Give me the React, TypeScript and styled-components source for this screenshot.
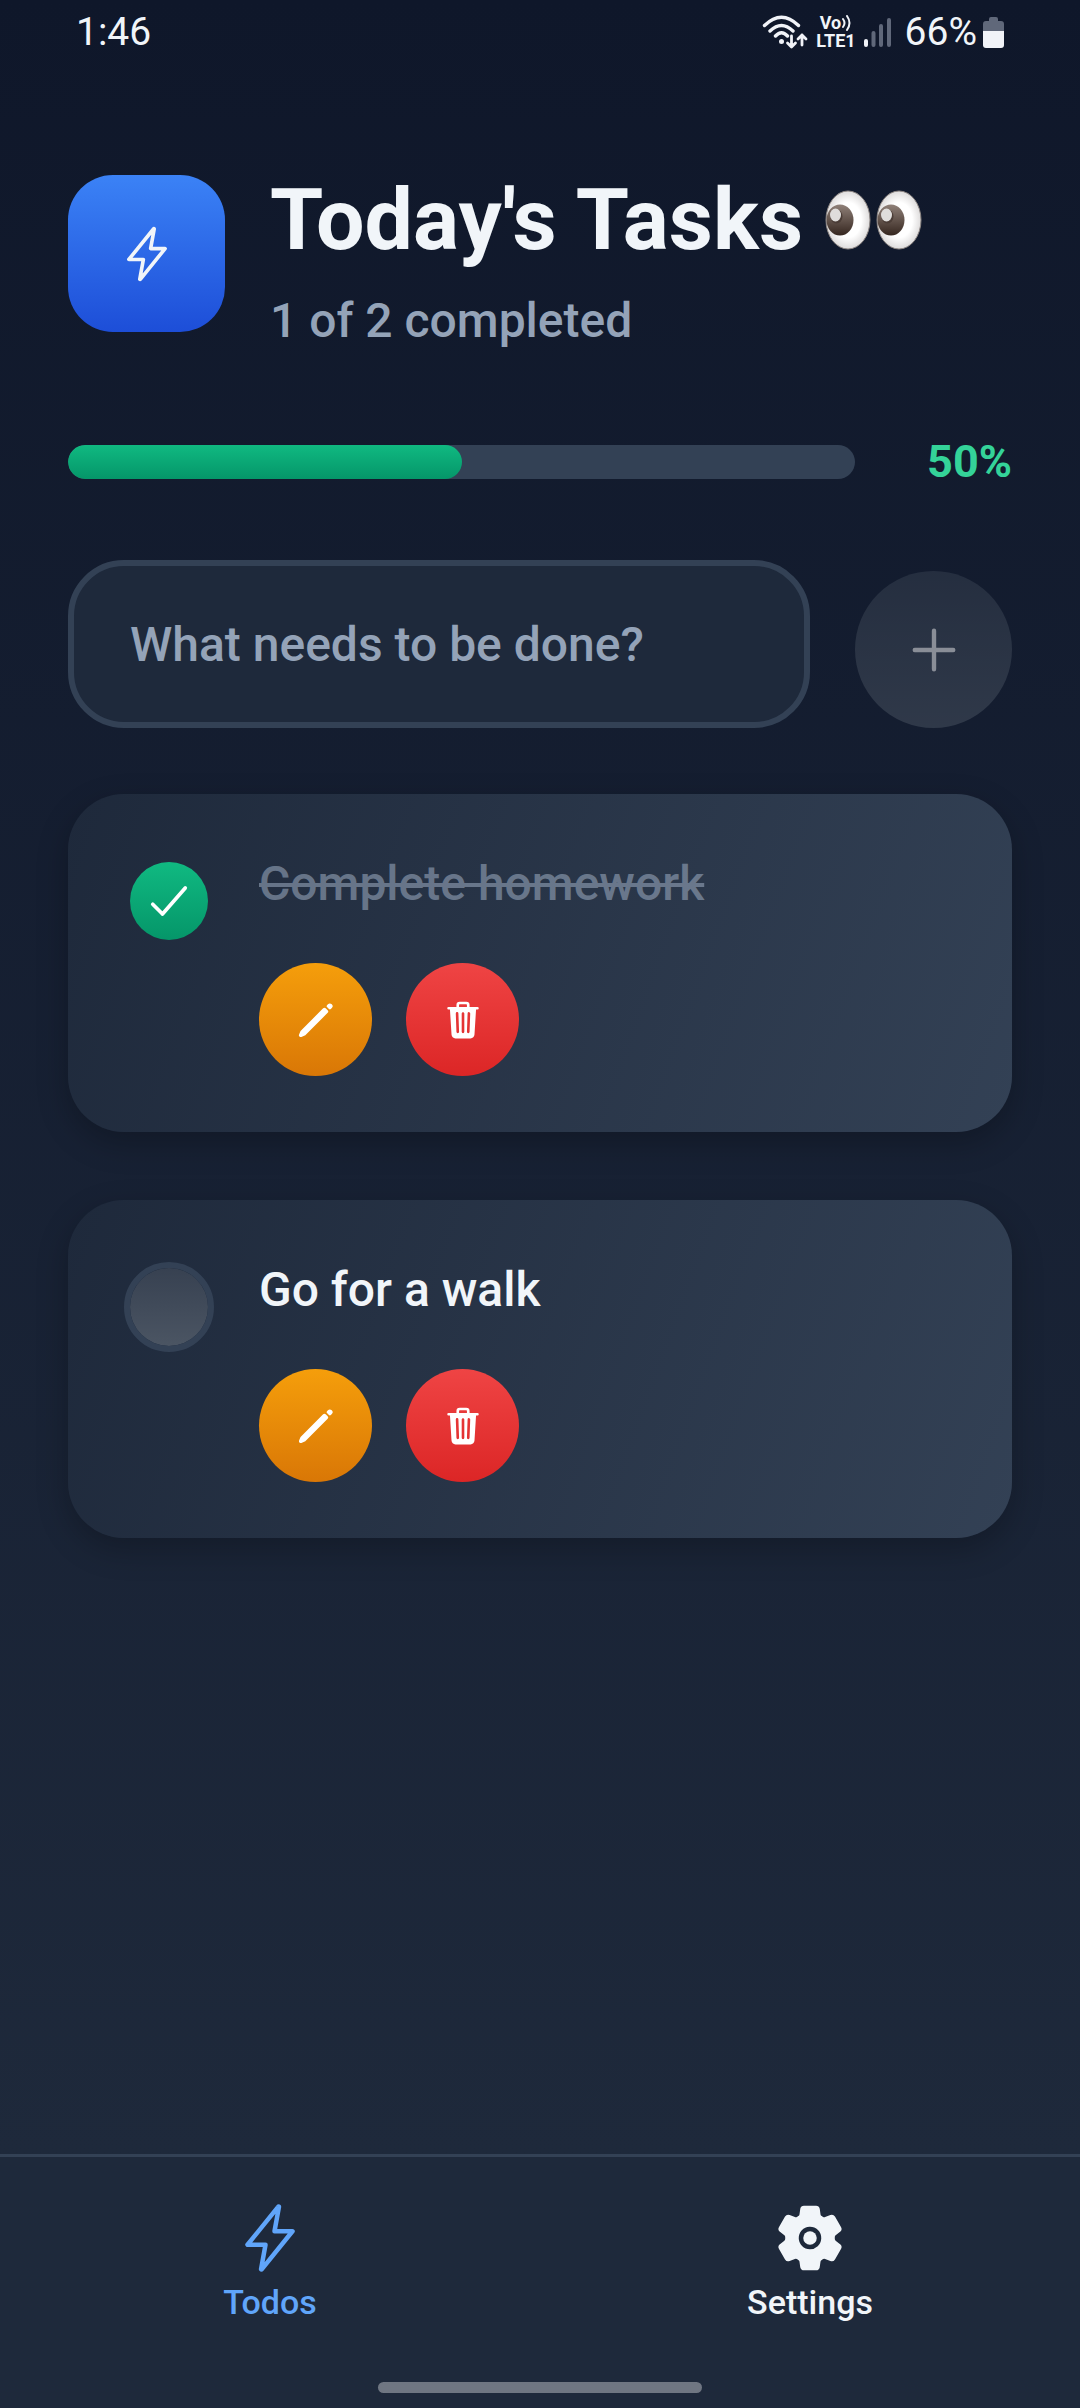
import React, { useState } from "react";
import styled, { createGlobalStyle, css } from "styled-components";
import { IoSettings } from "react-icons/io5";

const GlobalStyle = createGlobalStyle`
  *, *::before, *::after { box-sizing: border-box; }
  body { margin: 0; background: #1e293b; }
  button, input { font: inherit; color: inherit; }
  h1, h2, p, ul { margin: 0; padding: 0; }
`;

const Screen = styled.div`
  display: flex;
  flex-direction: column;
  min-height: 100vh;
  font-family: Roboto, "Noto Sans", sans-serif;
  color: #f1f5f9;
  background: #1e293b;
`;

const Main = styled.main`
  flex: 1;
  display: flex;
  flex-direction: column;
  background: linear-gradient(180deg, #0f172a 0%, #1e293b 100%);
`;

const StatusBar = styled.div`
  display: flex;
  justify-content: space-between;
  align-items: center;
  height: 64px;
  padding: 0 76px;
  font-size: 39px;
  line-height: 48px;
`;

const StatusGroup = styled.div<{ $gap: number }>`
  display: flex;
  align-items: center;
  gap: ${(p) => p.$gap}px;
`;

const Content = styled.div`
  display: flex;
  flex-direction: column;
  padding: 111px 68px 68px;
`;

const Header = styled.header`
  display: flex;
  gap: 45px;
`;

const Logo = styled.div`
  display: flex;
  align-items: center;
  justify-content: center;
  flex: none;
  width: 157px;
  height: 157px;
  border-radius: 45px;
  background: linear-gradient(180deg, #3b82f6, #1d4ed8);
`;

const Heading = styled.div`
  display: flex;
  flex-direction: column;
  gap: 22px;
`;

const Title = styled.h1`
  display: flex;
  align-items: center;
  gap: 22px;
  font-size: 86px;
  line-height: 90px;
  font-weight: 700;
`;

const Subtitle = styled.p`
  font-size: 48px;
  line-height: 68px;
  font-weight: 500;
  color: #94a3b8;
`;

const ProgressRow = styled.div`
  display: flex;
  align-items: center;
  margin-top: 79px;
`;

const Track = styled.div`
  flex: 1;
  height: 34px;
  border-radius: 17px;
  background: #334155;
  overflow: hidden;
`;

const Fill = styled.div`
  height: 100%;
  border-radius: 17px;
  background: linear-gradient(180deg, #10b981, #059669);
`;

const Percent = styled.span`
  width: 157px;
  font-size: 45px;
  line-height: 56px;
  font-weight: 700;
  text-align: right;
  color: #34d399;
`;

const Form = styled.form`
  display: flex;
  align-items: flex-end;
  gap: 45px;
  margin-top: 70px;
`;

const TaskInput = styled.input`
  flex: 1;
  min-width: 0;
  height: 168px;
  padding: 0 56px;
  border: 6px solid #334155;
  border-radius: 56px;
  outline: none;
  background: #1e293b;
  font-size: 48px;
  font-weight: 500;
  &::placeholder { color: #94a3b8; opacity: 1; }
`;

const round = css`
  display: flex;
  align-items: center;
  justify-content: center;
  flex: none;
  padding: 0;
  border: 0;
  border-radius: 50%;
`;

const AddButton = styled.button`
  ${round}
  width: 157px;
  height: 157px;
  background: linear-gradient(180deg, #374151, #4b5563);
  opacity: 0.5;
`;

const List = styled.ul`
  display: flex;
  flex-direction: column;
  gap: 68px;
  margin-top: 66px;
  list-style: none;
`;

const Card = styled.li`
  display: flex;
  gap: 45px;
  padding: 56px;
  border-radius: 56px;
  background: linear-gradient(110deg, #1e293b, #334155);
  box-shadow: 0 11px 32px rgba(0, 0, 0, 0.24);
`;

const CheckBox = styled.input`
  ${round}
  appearance: none;
  width: 90px;
  height: 90px;
  margin: 6px 0 0;
  border: 6px solid #334155;
  background: linear-gradient(180deg, #374151, #4b5563) padding-box;
  &:checked {
    border-color: transparent;
    background: linear-gradient(180deg, #10b981, #059669) padding-box;
  }
`;

const CheckCell = styled.div`
  display: grid;
  align-items: start;
  > * { grid-area: 1 / 1; }
  > svg { margin: 25px 0 0 19px; pointer-events: none; }
`;

const TaskBody = styled.div`
  display: flex;
  flex-direction: column;
  flex: 1;
  gap: 45px;
`;

const TaskLabel = styled.label<{ $done: boolean }>`
  font-size: 48px;
  line-height: 68px;
  font-weight: 500;
  color: ${(p) => (p.$done ? "#94a3b8" : "#f1f5f9")};
  opacity: ${(p) => (p.$done ? 0.6 : 1)};
  text-decoration: ${(p) => (p.$done ? "line-through" : "none")};
`;

const Actions = styled.div`
  display: flex;
  gap: 34px;
`;

const ActionButton = styled.button<{ $from: string; $to: string }>`
  ${round}
  width: 113px;
  height: 113px;
  background: linear-gradient(180deg, ${(p) => p.$from}, ${(p) => p.$to});
`;

const TabBar = styled.nav`
  display: grid;
  grid-template-columns: 1fr 1fr;
  padding: 45px 0 60px;
  border-top: 3px solid #334155;
`;

const Tab = styled.a<{ $active?: boolean }>`
  display: flex;
  flex-direction: column;
  align-items: center;
  gap: 8px;
  font-size: 34px;
  line-height: 40px;
  font-weight: 500;
  text-decoration: none;
  color: ${(p) => (p.$active ? "#60a5fa" : "#f1f5f9")};
`;

const HomeIndicator = styled.div`
  width: 30%;
  height: 11px;
  margin: 0 auto 15px;
  border-radius: 6px;
  background: #6f7682;
`;

const Bolt = ({ size }: { size: number }) => (
  <svg width={size} height={size} viewBox="0 0 512 512" fill="none" stroke="currentColor" strokeWidth="32" strokeLinecap="round" strokeLinejoin="round" aria-hidden="true">
    <path d="M315.27 33L96 304h128l-31.51 173.23a2.36 2.36 0 0 0 2.33 2.77 2.36 2.36 0 0 0 1.89-.95L416 208H288l31.66-173.25a2.45 2.45 0 0 0-2.44-2.75 2.42 2.42 0 0 0-1.95 1z" />
  </svg>
);

const Eyes = () => (
  <svg width="98" height="62" viewBox="0 0 98 62" role="img" aria-label="eyes">
    <defs>
      <radialGradient id="eyeball">
        <stop offset="0.6" stopColor="#ffffff" />
        <stop offset="1" stopColor="#dedcdc" />
      </radialGradient>
      <linearGradient id="iris" x1="0" y1="0" x2="0" y2="1">
        <stop offset="0" stopColor="#8f8078" />
        <stop offset="1" stopColor="#35261f" />
      </linearGradient>
    </defs>
    {[0, 51].map((x) => (
      <g key={x} transform={`translate(${x} 0)`}>
        <ellipse cx="23" cy="31" rx="22" ry="29" fill="url(#eyeball)" stroke="#8d8683" strokeWidth="1" />
        <ellipse cx="15" cy="31" rx="13.5" ry="15.500" fill="url(#iris)" />
        <ellipse cx="11.5" cy="27.5" rx="6" ry="7" fill="#4b3d37" />
        <ellipse cx="10.500" cy="26" rx="5.500" ry="6.500" fill="#dfdddb" />
      </g>
    ))}
  </svg>
);

const Plus = () => (
  <svg width="56" height="56" viewBox="0 0 512 512" fill="none" stroke="#fff" strokeWidth="40" strokeLinecap="round" aria-hidden="true">
    <path d="M256 80v352M432 256H80" />
  </svg>
);

const Check = () => (
  <svg width="52" height="52" viewBox="0 0 512 512" fill="none" stroke="#fff" strokeWidth="36" strokeLinecap="round" strokeLinejoin="round" aria-hidden="true">
    <path d="M416 128L192 384l-96-96" />
  </svg>
);

const Pencil = () => (
  <svg width="42" height="42" viewBox="0 0 512 512" fill="#fff" stroke="#fff" strokeLinecap="round" strokeLinejoin="round" aria-hidden="true">
    <path strokeWidth="44" d="M358.62 129.28L86.49 402.08L70 442l39.92-16.49l272.8-272.13l-24.1-24.1z" />
    <path strokeWidth="32" d="M413.07 74.84l-11.79 11.78l24.1 24.1l11.79-11.79a16.51 16.51 0 0 0 0-23.34l-.75-.75a16.51 16.51 0 0 0-23.35 0z" />
  </svg>
);

const Trash = () => (
  <svg width="42" height="42" viewBox="0 0 512 512" fill="#fff" aria-hidden="true">
    <path d="M432 96h-96V72a40 40 0 0 0-40-40h-80a40 40 0 0 0-40 40v24H80a16 16 0 0 0 0 32h17l19 304.92c1.42 26.85 22 47.08 48 47.08h184c26.13 0 46.3-19.78 48-47l19-305h17a16 16 0 0 0 0-32zM192.57 416H192a16 16 0 0 1-16-15.43l-8-224a16 16 0 1 1 32-1.14l8 224A16 16 0 0 1 192.57 416zM272 400a16 16 0 0 1-32 0V176a16 16 0 0 1 32 0zm32-304h-96V72a7.91 7.91 0 0 1 8-8h80a7.91 7.91 0 0 1 8 8zm32 304.57A16 16 0 0 1 320 416h-.58A16 16 0 0 1 304 399.43l8-224a16 16 0 1 1 32 1.14z" />
  </svg>
);

const Wifi = () => (
  <svg width="46" height="36" viewBox="0 0 46 36" fill="none" stroke="#f1f3f8" strokeWidth="3.4" strokeLinecap="round" strokeLinejoin="round" aria-hidden="true">
    <path d="M2.500 11.5Q19.5-5 36.500 11.5M8 17Q19.5 6 31 17M13.500 22Q19.5 15.5 25.500 22" />
    <circle cx="19.5" cy="27.5" r="2.500" fill="#f1f3f8" stroke="none" />
    <path d="M29.500 22v11M25.500 29l4 4 4-4M40 31V21M36 25l4-4 4 4" strokeWidth="2.8" />
  </svg>
);

const VoLabel = styled.span`
  display: flex;
  flex-direction: column;
  align-items: center;
  font-size: 18px;
  line-height: 18px;
  font-weight: 700;
`;

const VoTop = styled.span`
  display: flex;
  align-items: center;
  gap: 1px;
`;

const VoWaves = () => (
  <svg width="10" height="16" viewBox="0 0 10 16" fill="none" stroke="#f1f3f8" strokeWidth="2" strokeLinecap="round" aria-hidden="true">
    <path d="M1 4q3 4 0 8M5 1q5 7 0 14" />
  </svg>
);

const Signal = () => (
  <svg width="27" height="30" viewBox="0 0 27 30" stroke="#60687a" strokeWidth="4" strokeLinecap="round" aria-hidden="true">
    <path d="M2 24v4" stroke="#f1f3f8" />
    <path d="M9.500 16v12M17 9v19M25 3v25" />
  </svg>
);

const Battery = () => (
  <svg width="21" height="31" viewBox="0 0 21 31" aria-hidden="true">
    <path d="M6 2a2 2 0 0 1 2-2h5a2 2 0 0 1 2 2v2h3a3 3 0 0 1 3 3v8H0V7a3 3 0 0 1 3-3h3z" fill="#60687a" />
    <path d="M0 14h21v14a3 3 0 0 1-3 3H3a3 3 0 0 1-3-3z" fill="#f1f3f8" />
  </svg>
);

interface Task { id: string; text: string; done: boolean; }

export default function App() {
  const [tasks, setTasks] = useState<Task[]>([
    { id: "homework", text: "Complete homework", done: true },
    { id: "walk", text: "Go for a walk", done: false },
  ]);
  const [draft, setDraft] = useState("");
  const done = tasks.filter((t) => t.done).length;
  const percent = tasks.length ? Math.round((done / tasks.length) * 100) : 0;

  const toggle = (id: string) =>
    setTasks(tasks.map((t) => (t.id === id ? { ...t, done: !t.done } : t)));
  const remove = (id: string) => setTasks(tasks.filter((t) => t.id !== id));
  const add = (e: React.FormEvent) => {
    e.preventDefault();
    if (!draft.trim()) return;
    setTasks([...tasks, { id: String(Date.now()), text: draft.trim(), done: false }]);
    setDraft("");
  };

  return (
    <Screen>
      <GlobalStyle />
      <Main>
        <StatusBar>
          <span>1:46</span>
          <StatusGroup $gap={14}>
            <StatusGroup $gap={8}>
              <Wifi />
              <VoLabel>
                <VoTop>Vo<VoWaves /></VoTop>
                <span>LTE1</span>
              </VoLabel>
              <Signal />
            </StatusGroup>
            <StatusGroup $gap={6}>
              <span>66%</span>
              <Battery />
            </StatusGroup>
          </StatusGroup>
        </StatusBar>
        <Content>
          <Header>
            <Logo><Bolt size={58} /></Logo>
            <Heading>
              <Title>Today's Tasks <Eyes /></Title>
              <Subtitle>{done} of {tasks.length} completed</Subtitle>
            </Heading>
          </Header>
          <ProgressRow>
            <Track><Fill style={{ width: `${percent}%` }} /></Track>
            <Percent>{percent}%</Percent>
          </ProgressRow>
          <Form onSubmit={add}>
            <TaskInput
              aria-label="New task"
              placeholder="What needs to be done?"
              value={draft}
              onChange={(e) => setDraft(e.target.value)}
            />
            <AddButton aria-label="Add task"><Plus /></AddButton>
          </Form>
          <List>
            {tasks.map((t) => (
              <Card key={t.id}>
                <CheckCell>
                  <CheckBox id={t.id} type="checkbox" checked={t.done} onChange={() => toggle(t.id)} />
                  {t.done && <Check />}
                </CheckCell>
                <TaskBody>
                  <TaskLabel htmlFor={t.id} $done={t.done}>{t.text}</TaskLabel>
                  <Actions>
                    <ActionButton $from="#f59e0b" $to="#d97706" aria-label="Edit task"><Pencil /></ActionButton>
                    <ActionButton $from="#ef4444" $to="#dc2626" aria-label="Delete task" onClick={() => remove(t.id)}><Trash /></ActionButton>
                  </Actions>
                </TaskBody>
              </Card>
            ))}
          </List>
        </Content>
      </Main>
      <TabBar>
        <Tab href="#todos" $active><Bolt size={72} />Todos</Tab>
        <Tab href="#settings"><IoSettings size={72} aria-hidden="true" />Settings</Tab>
      </TabBar>
      <HomeIndicator />
    </Screen>
  );
}
